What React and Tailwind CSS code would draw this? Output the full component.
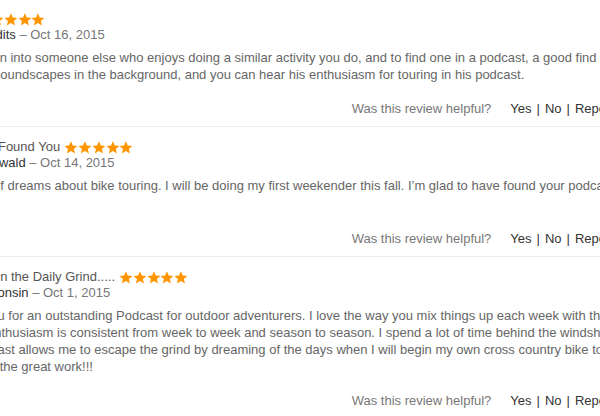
import React from "react";

const reviews = [
    {
        id: 1,
        title: "Love",
        author: "Trail Bandits",
        date: "Oct 16, 2015",
        lines: [
            "Nice to run into someone else who enjoys doing a similar activity you do, and to find one in a podcast, a good find indeed. Love the",
            "ambient soundscapes in the background, and you can hear his enthusiasm for touring in his podcast.",
        ],
        bodyClass: "",
    },
    {
        id: 2,
        title: "Glad We Found You",
        author: "Jamie Oswald",
        date: "Oct 14, 2015",
        lines: [
            "I am full of dreams about bike touring. I will be doing my first weekender this fall. I’m glad to have found your podcast!",
        ],
        // this one keeps the height of two lines
        bodyClass: "min-h-[36px]",
    },
    {
        id: 3,
        title: "Vacation in the Daily Grind.....",
        author: "BikeWisconsin",
        date: "Oct 1, 2015",
        lines: [
            "Thank you for an outstanding Podcast for outdoor adventurers. I love the way you mix things up each week with the guests.",
            "Dave's enthusiasm is consistent from week to week and season to season. I spend a lot of time behind the windshield and",
            "and podcast allows me to escape the grind by dreaming of the days when I will begin my own cross country bike tour.",
            "Keep up\u00a0 the great work!!!",
        ],
        bodyClass: "",
    },
];

const Star = () => (
    <svg viewBox="1 1.2 22 21.6" className="w-[13.8px] h-[13px] shrink-0" fill="#ff9500">
        <path d="M12 1.5l3.1 7.1 7.6.7-5.8 5 1.8 7.5L12 17.8l-6.7 4 1.8-7.5-5.8-5 7.6-.7z" />
    </svg>
);

const Review = ({ review, last }) => (
    <div className={`pt-[12px] pb-[9px] ${last ? "" : "border-b border-[#ececec]"}`}>
        {/* titulo + estrellas */}
        <div className="flex items-center h-4 leading-4">
            <span className="text-[#555] whitespace-nowrap">{review.title}</span>
            <div className="flex ml-[4px]">
                {[0, 1, 2, 3, 4].map((i) => (
                    <Star key={i} />
                ))}
            </div>
        </div>
        <div className="h-4 leading-4 whitespace-nowrap">
            <span className="text-[#333]">{review.author}</span>
            <span className="text-[#777]"> – {review.date}</span>
        </div>

        {/* cuerpo */}
        <div className={`mt-[6px] leading-[17px] text-[#666] ${review.bodyClass}`}>
            {review.lines.map((line, i) => (
                <div key={i} className="whitespace-nowrap">
                    {line}
                </div>
            ))}
        </div>

        <div className="mt-[17px] flex justify-end leading-[17px] whitespace-nowrap">
            <span className="text-[#777]">Was this review helpful?</span>
            <span className="ml-[19px] text-[#333]">
                Yes<span className="mx-[5px]">|</span>No<span className="mx-[5px]">|</span>Report
            </span>
        </div>
    </div>
);

export default function App() {
    return (
        <div
            className="w-[600px] h-[416px] overflow-hidden bg-white text-[13px]"
            style={{ fontFamily: '"Liberation Sans", Arial, sans-serif' }}
        >
            <div className="ml-[-56px] w-[670px] -mt-[1px]">
                {reviews.map((r, idx) => (
                    <Review key={r.id} review={r} last={idx === reviews.length - 1} />
                ))}
            </div>
        </div>
    );
}
